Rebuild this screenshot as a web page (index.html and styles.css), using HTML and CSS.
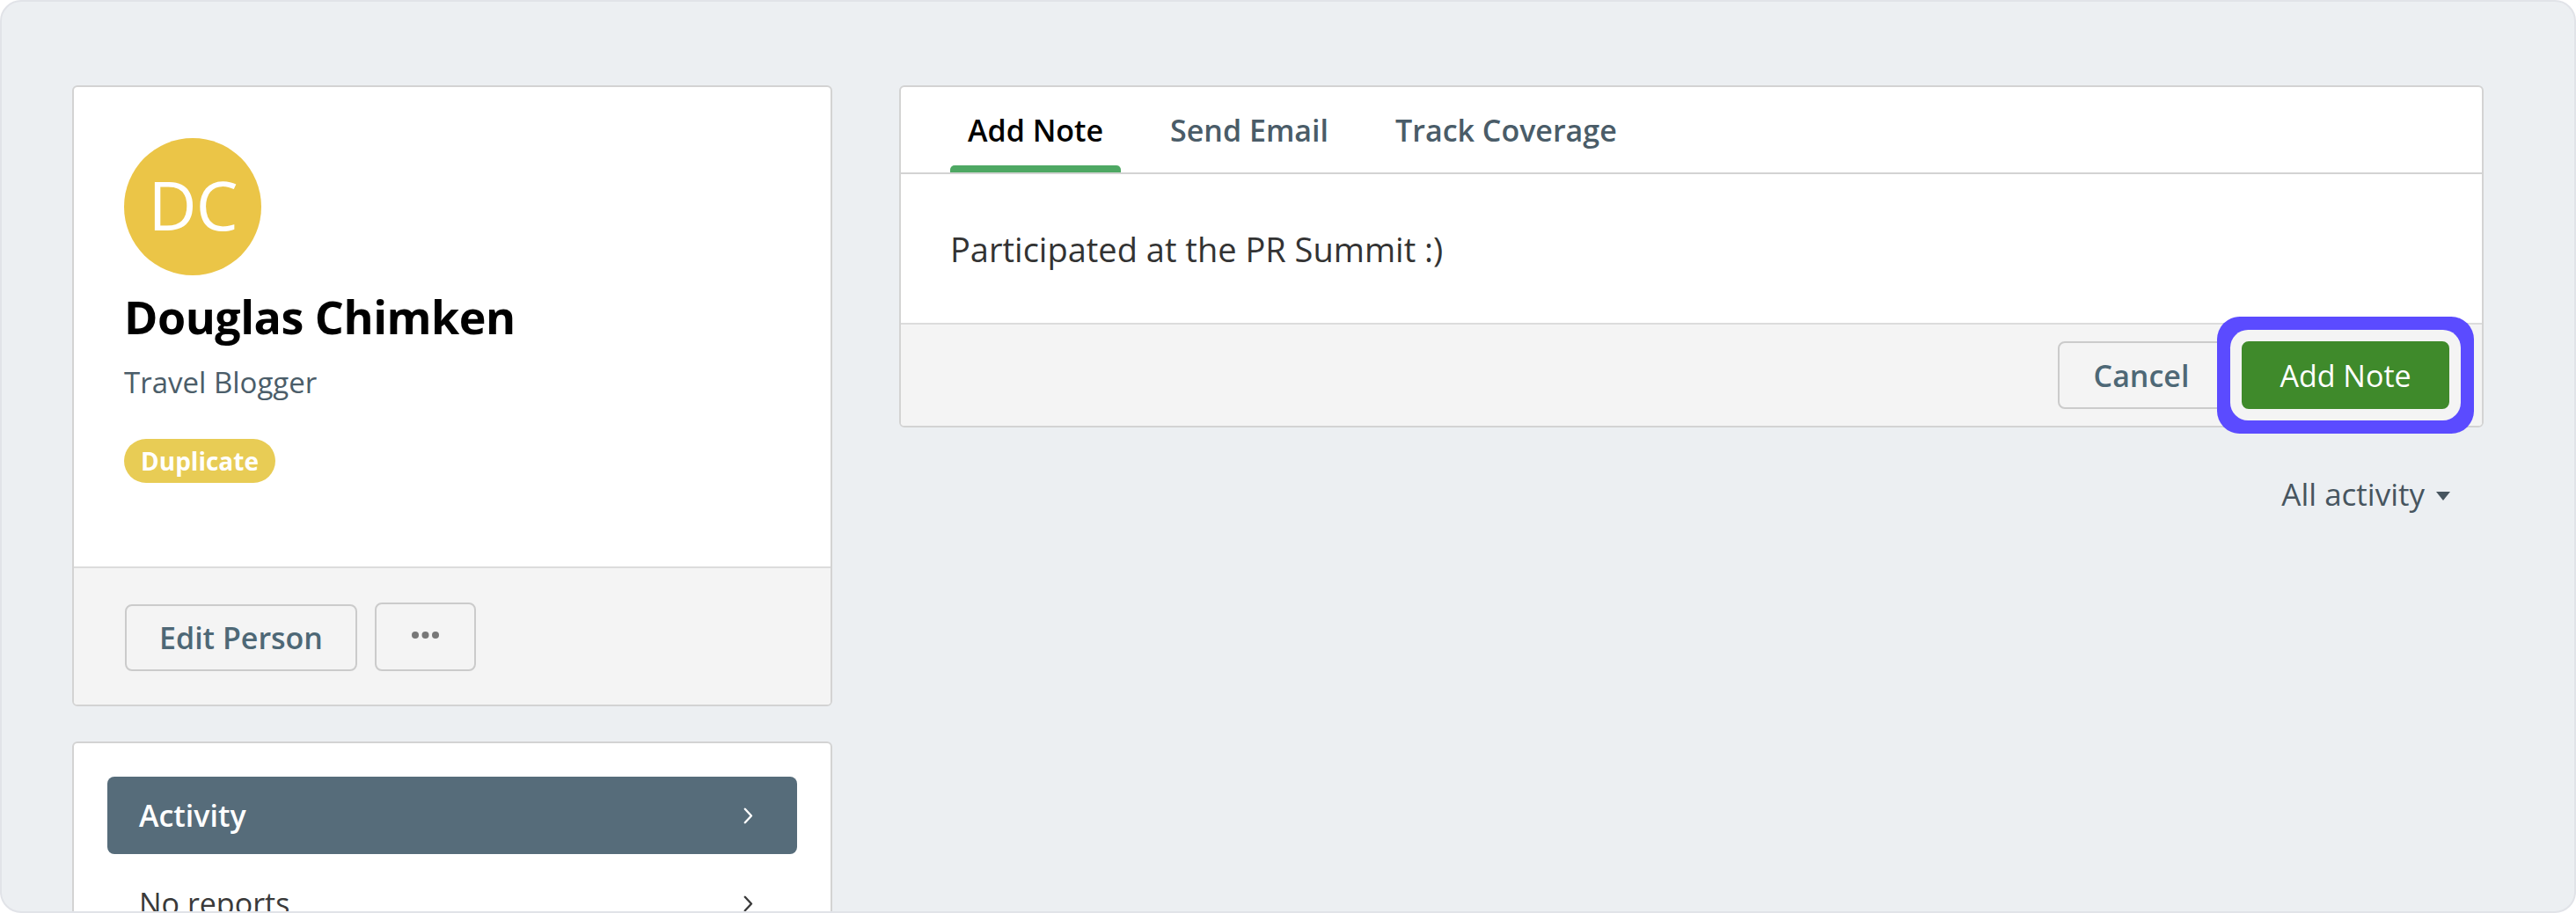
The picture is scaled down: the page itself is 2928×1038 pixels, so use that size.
FILE: index.html
```html
<!DOCTYPE html>
<html lang="en">
<head>
<meta charset="utf-8">
<title>Douglas Chimken</title>
<link rel="stylesheet" href="styles.css">
</head>
<body>
<div class="frame">
  <div class="layout">
    <aside class="left-col">
      <section class="card profile">
        <div class="profile-body">
          <div class="avatar">DC</div>
          <h1 class="name">Douglas Chimken</h1>
          <div class="job">Travel Blogger</div>
          <div class="badge-row"><span class="badge">Duplicate</span></div>
        </div>
        <div class="profile-footer">
          <button class="btn btn-edit">Edit Person</button>
          <button class="btn btn-more" aria-label="More">
            <svg width="31" height="8" viewBox="0 0 31 8"><circle cx="4" cy="4" r="4"/><circle cx="15.5" cy="4" r="4"/><circle cx="27" cy="4" r="4"/></svg>
          </button>
        </div>
      </section>
      <nav class="card side-nav">
        <a class="nav-item active">Activity
          <svg class="chev" width="11" height="19" viewBox="0 0 11 19"><path d="M1.8 1.8 L9 9.5 L1.8 17.2"/></svg>
        </a>
        <a class="nav-item">No reports
          <svg class="chev" width="11" height="19" viewBox="0 0 11 19"><path d="M1.8 1.8 L9 9.5 L1.8 17.2"/></svg>
        </a>
      </nav>
    </aside>
    <main class="right-col">
      <section class="card composer">
        <div class="tabs">
          <div class="tab active">Add Note</div>
          <div class="tab">Send Email</div>
          <div class="tab">Track Coverage</div>
        </div>
        <div class="composer-body">Participated at the PR Summit :)</div>
        <div class="composer-footer">
          <button class="btn btn-cancel">Cancel</button>
          <button class="btn btn-primary">Add Note</button>
        </div>
      </section>
      <div class="filter-row">
        <button class="filter">All activity<span class="caret"></span></button>
      </div>
    </main>
  </div>
</div>
</body>
</html>
```

FILE: styles.css
```css
html, body {
  margin: 0;
  padding: 0;
  background: #ffffff;
}

body {
  font-family: "Open Sans", "Noto Sans", sans-serif;
}

.frame {
  box-sizing: border-box;
  width: 2928px;
  height: 1038px;
  border: 2px solid #e1e3e8;
  border-radius: 24px;
  background: #eceff2;
  overflow: hidden;
  padding: 95px 0 0 80px;
}

.layout {
  display: flex;
  gap: 76px;
  align-items: flex-start;
}

.left-col {
  width: 864px;
  flex: none;
}

.right-col {
  width: 1801px;
  flex: none;
}

.card {
  box-sizing: border-box;
  background: #ffffff;
  border: 2px solid #d3d3d3;
  border-radius: 6px;
}

/* Profile card */
.profile {
  overflow: hidden;
}

.profile-body {
  padding: 58px 57px 95px 57px;
}

.avatar {
  box-sizing: border-box;
  width: 156px;
  height: 156px;
  border-radius: 50%;
  background: #ebc547;
  color: #ffffff;
  font-size: 76px;
  font-weight: 400;
  display: flex;
  align-items: center;
  justify-content: center;
  padding-bottom: 6px;
  letter-spacing: -1px;
}

.name {
  margin: 11px 0 0 0;
  font-size: 52px;
  line-height: 72px;
  font-weight: 700;
  letter-spacing: -0.5px;
  color: #000000;
}

.job {
  margin-top: 17px;
  font-size: 33px;
  line-height: 44px;
  color: #4b5d69;
}

.badge-row {
  margin-top: 42px;
  display: flex;
}

.badge {
  height: 50px;
  line-height: 50px;
  padding: 0 19px;
  border-radius: 25px;
  background: #e8cc55;
  color: #ffffff;
  font-size: 28px;
  font-weight: 700;
}

.profile-footer {
  box-sizing: border-box;
  height: 157px;
  border-top: 2px solid #dcdcdc;
  background: #f4f4f4;
  padding: 39px 57px 0 58px;
  display: flex;
  align-items: flex-start;
  gap: 20px;
}

.btn {
  box-sizing: border-box;
  font-family: "Open Sans", "Noto Sans", sans-serif;
  font-size: 34px;
  font-weight: 600;
  border-radius: 8px;
  cursor: pointer;
  display: flex;
  align-items: center;
  justify-content: center;
  padding: 0;
}

.btn-edit,
.btn-cancel,
.btn-more {
  background: #f4f4f4;
  border: 2px solid #cbcbcb;
  color: #4e6876;
}

.btn-edit {
  width: 264px;
  height: 76px;
  margin-top: 2px;
}

.btn-more {
  width: 115px;
  height: 78px;
  padding-bottom: 4px;
}

.btn-more svg {
  fill: #787878;
}

/* Side nav */
.side-nav {
  margin-top: 40px;
  padding: 38px;
  display: flex;
  flex-direction: column;
  gap: 12px;
}

.nav-item {
  box-sizing: border-box;
  height: 88px;
  border-radius: 8px;
  padding: 0 50px 0 36px;
  display: flex;
  align-items: center;
  justify-content: space-between;
  font-size: 34px;
  color: #3a3a3a;
  text-decoration: none;
}

.nav-item.active {
  background: #566c7a;
  color: #ffffff;
  font-weight: 600;
}

.chev path {
  fill: none;
  stroke: currentColor;
  stroke-width: 2.4;
  stroke-linecap: round;
  stroke-linejoin: round;
}

/* Composer */
.tabs {
  box-sizing: border-box;
  height: 99px;
  border-bottom: 2px solid #d3d3d3;
  padding-left: 56px;
  display: flex;
  gap: 36px;
}

.tab {
  position: relative;
  padding: 0 20px;
  display: flex;
  align-items: center;
  font-size: 34px;
  font-weight: 600;
  color: #4a5c68;
}

.tab.active {
  color: #000000;
}

.tab.active::after {
  content: "";
  position: absolute;
  left: 0;
  right: 0;
  bottom: 0;
  height: 8px;
  border-radius: 5px 5px 0 0;
  background: #4ea863;
}

.composer-body {
  box-sizing: border-box;
  height: 169px;
  padding-left: 56px;
  display: flex;
  align-items: center;
  font-size: 38px;
  color: #333333;
}

.composer-footer {
  box-sizing: border-box;
  height: 117px;
  border-top: 2px solid #dcdcdc;
  background: #f4f4f4;
  border-radius: 0 0 4px 4px;
  padding: 0 37px 0 0;
  display: flex;
  align-items: center;
  justify-content: flex-end;
  gap: 19px;
}

.btn-cancel {
  width: 190px;
  height: 77px;
}

.btn-primary {
  width: 236px;
  height: 77px;
  background: #3f8a2b;
  border: 2px solid #3f8a2b;
  color: #ffffff;
  font-weight: 500;
  box-shadow: 0 0 0 13px #f4f4f4, 0 0 0 28px #5b4bff;
}

/* Filter */
.filter-row {
  display: flex;
  justify-content: flex-end;
  padding-right: 38px;
  margin-top: 54px;
}

.filter {
  background: none;
  border: none;
  padding: 0;
  font-family: "Open Sans", "Noto Sans", sans-serif;
  font-size: 35px;
  line-height: 44px;
  color: #47555f;
  display: flex;
  align-items: center;
}

.caret {
  width: 0;
  height: 0;
  margin-left: 13px;
  margin-top: 4px;
  border-left: 8.5px solid transparent;
  border-right: 8.5px solid transparent;
  border-top: 10px solid #47555f;
}
```
